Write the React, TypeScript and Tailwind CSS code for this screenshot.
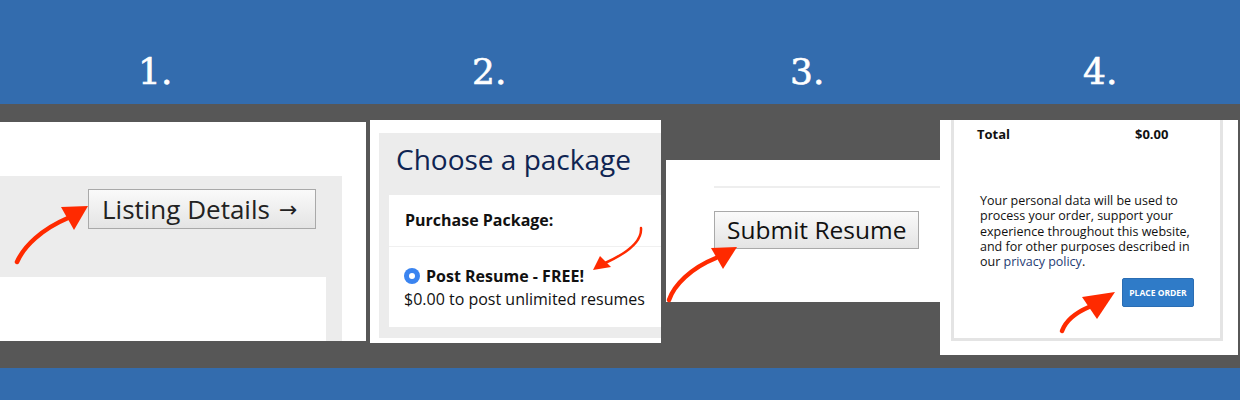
const sans = "font-['Open_Sans',_'Liberation_Sans',_sans-serif]";

function StepNumber({ n, className }: { n: number; className: string }) {
  return (
    <div className={`text-[36px] leading-none text-white font-['DejaVu_Serif',_serif] [-webkit-text-stroke:0.6px_white] ${className}`}>
      {n}.
    </div>
  );
}

function Arrows() {
  const red = "#ff2a00";
  return (
    <svg className="absolute inset-0 pointer-events-none" width="1240" height="400" viewBox="0 0 1240 400">
      {/* 1 */}
      <path d="M17 262 C24 246 42 229 68 218" fill="none" stroke={red} strokeWidth="4.5" strokeLinecap="round" />
      <polygon points="88,206 61,207 74,230" fill={red} />
      {/* 2 */}
      <path d="M641 228 C642 240 630 252 603 264" fill="none" stroke={red} strokeWidth="2.5" strokeLinecap="round" />
      <polygon points="593,270 600,256 611,267" fill={red} />
      {/* 3 */}
      <path d="M669 300 C674 285 691 268 716 258" fill="none" stroke={red} strokeWidth="4.5" strokeLinecap="round" />
      <polygon points="737,247 711,248 723,269" fill={red} />
      {/* 4 */}
      <path d="M1062 331 C1066 320 1075 313 1089 307" fill="none" stroke={red} strokeWidth="4.5" strokeLinecap="round" />
      <polygon points="1115,292 1082,297 1097,319" fill={red} />
    </svg>
  );
}

function ListingPanel() {
  return (
    <div className="mt-[18px] w-[366px] h-[219px] bg-white flex flex-col">
      <div className="mt-[54px] w-[342px] flex-1 bg-[#ececec] flex flex-col">
        <div className="flex justify-end pr-[26px] pt-[13px]">
          <button className={`h-[40px] w-[228px] pl-[13px] flex items-center gap-[9px] border border-[#a9a9a9] bg-gradient-to-b from-[#fafafa] to-[#e4e4e4] text-[26px] leading-none text-[#222] ${sans}`}>
            Listing Details
            <span className="font-['DejaVu_Sans',_sans-serif] text-[22px] mt-[2px]">→</span>
          </button>
        </div>
        <div className="mt-[48px] w-[326px] flex-1 bg-white" />
      </div>
    </div>
  );
}

function PackagePanel() {
  return (
    <div className="mt-[16px] ml-[4px] w-[291px] h-[223px] bg-white pt-[13px] pl-[9px] pb-[5px] flex">
      <div className="flex-1 bg-[#ececec] flex flex-col pl-[10px] pb-[11px]">
        <h2 className={`pl-[7px] pt-[6px] text-[28px] leading-[40px] text-[#0f2452] ${sans}`}>Choose a package</h2>
        <div className={`mt-[16px] flex-1 bg-white text-[#111] ${sans}`}>
          <div className="h-[52px] border-b border-[#f0f0f0] pl-[16px] pt-[13px] text-[16px] font-bold">Purchase Package:</div>
          <div className="pl-[15px] pt-[18px]">
            <div className="flex items-center gap-[6px] text-[16px] font-bold leading-[22px]">
              <span className="w-[16px] h-[16px] rounded-full bg-[#3a84f0] flex items-center justify-center">
                <span className="w-[6px] h-[6px] rounded-full bg-white" />
              </span>
              Post Resume - FREE!
            </div>
            <div className="text-[16px] leading-[24px]">$0.00 to post unlimited resumes</div>
          </div>
        </div>
      </div>
    </div>
  );
}

function SubmitPanel() {
  return (
    <div className="mt-[56px] ml-[5px] w-[274px] h-[142px] bg-white pl-[48px] pt-[26px]">
      <div className="h-[2px] bg-[#eeeeee]" />
      <button className={`mt-[23px] h-[38px] w-[205px] pl-[12px] text-left border border-[#a9a9a9] bg-gradient-to-b from-[#fafafa] to-[#e4e4e4] text-[24.5px] leading-none text-[#111] ${sans}`}>
        Submit Resume
      </button>
    </div>
  );
}

function OrderPanel() {
  return (
    <div className={`mt-[16px] w-[298px] h-[235px] bg-white pl-[11px] pr-[15px] pb-[14px] flex ${sans}`}>
      <div className="flex-1 border-x-[3px] border-b-[3px] border-[#e4e4e4] pl-[23px] text-[#111]">
        <div className="flex pt-[5px] text-[13px] font-bold leading-[18px]">
          <span className="w-[158px]">Total</span>
          <span>$0.00</span>
        </div>
        <p className="mt-[50px] pl-[3px] text-[12.5px] leading-[15.3px]">
          Your personal data will be used to<br />
          process your order, support your<br />
          experience throughout this website,<br />
          and for other purposes described in<br />
          our <span className="text-[#1f3c74]">privacy policy</span>.
        </p>
        <div className="flex justify-end pr-[26px] mt-[9px]">
          <button className="w-[72px] h-[29px] bg-[#2f7bc8] border border-[#2a6db3] rounded-[2px] text-[8.5px] font-bold text-white uppercase">
            Place Order
          </button>
        </div>
      </div>
    </div>
  );
}

export default function App() {
  return (
    <div className="relative w-[1240px] h-[400px] overflow-hidden bg-[#336cae]">
      <div className="h-[104px] flex pt-[54px] pl-[138px]">
        <StepNumber n={1} className="w-[334px]" />
        <StepNumber n={2} className="w-[318px]" />
        <StepNumber n={3} className="w-[293px]" />
        <StepNumber n={4} className="" />
      </div>
      <div className="h-[264px] bg-[#575757] flex items-start">
        <ListingPanel />
        <PackagePanel />
        <SubmitPanel />
        <OrderPanel />
      </div>
      <Arrows />
    </div>
  );
}
